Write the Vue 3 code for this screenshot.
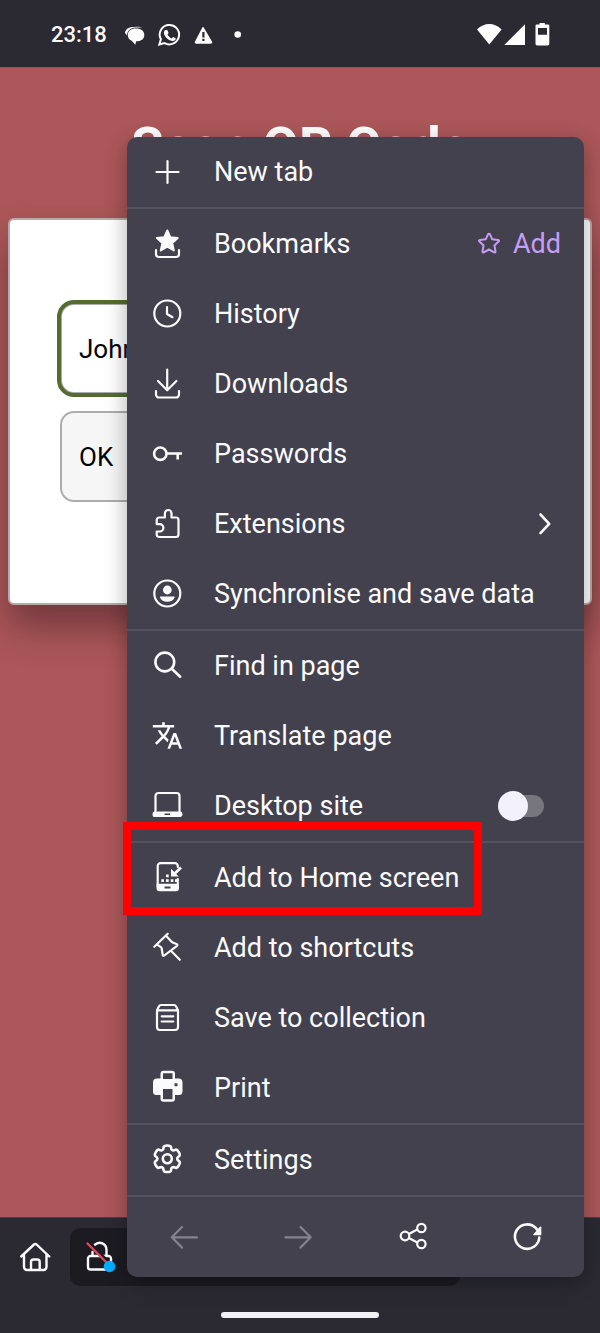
<script setup>
import { ref } from 'vue'

const name = ref('John')
const desktopSite = ref(false)

const groups = [
  [{ id: 'plus', label: 'New tab' }],
  [
    { id: 'bookmarks', label: 'Bookmarks' },
    { id: 'history', label: 'History' },
    { id: 'downloads', label: 'Downloads' },
    { id: 'passwords', label: 'Passwords' },
    { id: 'extensions', label: 'Extensions' },
    { id: 'sync', label: 'Synchronise and save data' },
  ],
  [
    { id: 'find', label: 'Find in page' },
    { id: 'translate', label: 'Translate page' },
    { id: 'desktop', label: 'Desktop site' },
  ],
  [
    { id: 'homescreen', label: 'Add to Home screen' },
    { id: 'shortcuts', label: 'Add to shortcuts' },
    { id: 'collection', label: 'Save to collection' },
    { id: 'print', label: 'Print' },
  ],
  [{ id: 'settings', label: 'Settings' }],
]

// Line art on a 32x32 grid
const strokes = {
  plus: 'M16.5 5v22M5.5 16h22',
  bookmarks: 'M5 22v4a3 3 0 0 0 3 3h17a3 3 0 0 0 3-3v-4',
  history: 'M29.3 15.5a13 13 0 1 1-26 0a13 13 0 0 1 26 0zM16 9v7l5.5 3.2',
  downloads: 'M16.2 1.5V22M7 13l9.2 9.3L25.4 13M5 23v3.5a3 3 0 0 0 3 3h17a3 3 0 0 0 3-3V23',
  passwords: 'M15.5 15.7a6.2 6.2 0 1 1-12.4 0a6.2 6.2 0 0 1 12.4 0zM15.5 15.5H31M26.7 15.5V21.5',
  extensions:
    'M13.9 9.5V5.3a3.3 3.3 0 0 1 6.6 0v4.2h4.5a2.5 2.5 0 0 1 2.5 2.5v14.5a2.5 2.5 0 0 1-2.5 2.5H8.2a2.5 2.5 0 0 1-2.5-2.5v-3h3a3.7 3.7 0 0 0 0-7.4h-3V12a2.5 2.5 0 0 1 2.5-2.5z',
  sync: 'M29.3 15.5a13 13 0 1 1-26 0a13 13 0 0 1 26 0z',
  find: 'M23.2 12a9.4 9.4 0 1 1-18.8 0a9.4 9.4 0 0 1 18.8 0zM20.5 18.5l8.700 8.200',
  desktop: 'M4.5 22V6a3 3 0 0 1 3-3h18a3 3 0 0 1 3 3v16',
  homescreen: 'M26.8 5V4a2.800 2.800 0 0 0-2.800-2.800H9.500A2.800 2.800 0 0 0 6.700 4v21M26.800 17v8',
  shortcuts:
    'M3.300 14.800L16.700 1.800M6 12.600l3.600 2.300q.9.600 1.100 1.600l1 6.500q.4 1.500 1.600.5L26 13.800q1-1.200-.5-1.800l-3.800-1.500q-.8-.3-1.300-1L15.500 4.200M20.200 19l8.600 8.800',
  collection:
    'M6 8.300L8 4.200Q8.600 3 10 3h13q1.400 0 2 1.200l2 4.100V25a3 3 0 0 1-3 3H9a3 3 0 0 1-3-3zM6 8.300h21M10.700 14.300h11.600M10.700 19.500h11.600',
}

// Six-toothed wheel traced from polar points, corners softened by quadratic curves
function gearPath(cx, cy) {
  const pts = []
  for (let i = 0; i < 6; i++) {
    const a = i * 60
    for (const [d, r] of [[-16, 13.8], [16, 13.8], [22, 10], [38, 10]]) {
      const t = ((a + d - 90) * Math.PI) / 180
      pts.push([cx + r * Math.cos(t), cy + r * Math.sin(t)])
    }
  }
  const mid = (p, q) => `${(p[0] + q[0]) / 2} ${(p[1] + q[1]) / 2}`
  let d = `M${mid(pts[pts.length - 1], pts[0])}`
  pts.forEach((p, i) => {
    d += `Q${p[0]} ${p[1]} ${mid(p, pts[(i + 1) % pts.length])}`
  })
  return d + 'z'
}
strokes.settings = gearPath(16.3, 14.8) + 'M20.8 14.8a4.5 4.5 0 1 1-9 0a4.5 4.5 0 0 1 9 0z'
</script>

<template>
  <div class="screen">
    <header class="status">
      <time class="clock">23:18</time>
      <svg class="notices" width="120" height="24" viewBox="0 0 120 24" aria-hidden="true">
        <path fill="#fff" d="M9 4C4 3.800.3 6 0 10l2 2.500C2.300 8 5 5 11 4.600h6.500C14.500 3.300 12 3.600 9 4z" />
        <path fill="#fff" d="M11 5.500c5 0 8.300 2.200 8.300 6.500 0 4-3 6.300-8.300 6.300l-.6 3.500-3.700-4C4 16.800 2.800 14.500 2.800 12c0-4.300 3.200-6.500 8.200-6.500z" />
        <path fill="none" stroke="#fff" stroke-width="2" d="M34.300 21.500l1.600-5.200a9.700 9.700 0 1 1 3.600 3.700z" />
        <path fill="#fff" d="M40.300 7h2l1.300 3-1.100 1.600c1 2 2.300 3 4 3.800l1.600-1.500 2.700 1.300c0 2-1.800 3-3.700 2.700-4-.7-8-4.700-8.200-8 0-1.200.6-2.300 1.400-2.900z" />
        <path fill="#fff" fill-rule="evenodd" d="M78.600 4.300 87 18.500a1.500 1.500 0 0 1-1.300 2.300H71.300a1.500 1.500 0 0 1-1.300-2.300l7.200-13.800a.9.900 0 0 1 1.400-.4zM77.300 9v5.500h2.200V9zM77.300 15.800V18h2.200v-2.200z" />
        <circle cx="112.700" cy="11.500" r="3.300" fill="#fff" />
      </svg>
      <svg class="signals" width="74" height="24" viewBox="0 0 74 24" aria-label="Wi-Fi, mobile signal and battery">
        <path fill="#fff" d="M0 6.500Q5.500 1 12.300 1t12.300 5.500L12.300 21.500z" />
        <path fill="#fff" d="M48 1.200V22H27.300z" />
        <path fill="#fff" fill-rule="evenodd" d="M62.500 0h5.300v1.500h3.200a1.300 1.300 0 0 1 1.300 1.300v18a1.700 1.700 0 0 1-1.700 1.700h-10.400a1.700 1.700 0 0 1-1.700-1.700v-18A1.300 1.300 0 0 1 59.800 1.500h2.700zM61 5v6.800h9V5z" />
      </svg>
    </header>

    <main class="page">
      <h1>Scan QR Code</h1>
      <form class="card" @submit.prevent>
        <input v-model="name" class="field" type="text" aria-label="Name" />
        <button class="ok" type="submit">OK</button>
      </form>
    </main>

    <footer class="toolbar">
      <div class="tools">
        <button class="home" aria-label="Home">
          <svg width="32" height="32" viewBox="0 0 32 32" fill="none" stroke="#fbfbfe" stroke-width="2.400" stroke-linecap="round" stroke-linejoin="round">
            <path d="M2.200 15.500 15 3.500q1.300-1 2.600 0l12.700 12M5 13.500V26a3 3 0 0 0 3 3h16.500a3 3 0 0 0 3-3V13.500M12 29v-8a2.500 2.500 0 0 1 2.500-2.500h3.700a2.500 2.500 0 0 1 2.500 2.500v8" />
          </svg>
        </button>
        <button class="address" aria-label="Site security">
          <svg width="32" height="34" viewBox="0 0 32 34" fill="none" stroke-width="2.400" stroke-linecap="round" stroke-linejoin="round">
            <path stroke="#fbfbfe" d="M7.500 16v-4M9.500 5c5-4.500 12-1.500 12 5v6M5.500 16h18a2.500 2.500 0 0 1 2.500 2.500V27a2.500 2.500 0 0 1-2.500 2.500h-18A2.500 2.500 0 0 1 3 27v-8.500A2.500 2.500 0 0 1 5.500 16z" />
            <path stroke="#1c1b22" stroke-width="3" d="M6 4l18 18.500" />
            <path stroke="#e2445c" d="M2.500 3.500l19 19" />
            <circle cx="24.500" cy="26.500" r="5.800" fill="#00aeff" />
          </svg>
        </button>
      </div>
      <div class="handle"></div>
    </footer>

    <nav class="menu" aria-label="Browser menu">
      <ul v-for="(group, g) in groups" :key="g">
        <li v-for="item in group" :key="item.id">
          <component :is="item.id === 'desktop' ? 'label' : 'button'" class="item" :for="item.id === 'desktop' ? 'desktop-site' : undefined">
            <svg class="icon" width="32" height="32" viewBox="0 0 32 32" aria-hidden="true">
              <path v-if="strokes[item.id]" class="line" :class="item.id" :d="strokes[item.id]" />
              <path v-if="item.id === 'bookmarks'" class="fill star" d="M16.300 2.500l3 6.700 7.400.8-5.500 5 1.600 7.400-6.500-3.700-6.500 3.700 1.600-7.400-5.500-5 7.400-.8z" />
              <template v-if="item.id === 'sync'">
                <circle class="fill" cx="16.300" cy="12" r="4.400" />
                <path class="fill" d="M9.500 18.400h13.600q.8 0 .6.8c-1 3-4 4.600-7.400 4.600s-6.400-1.600-7.400-4.600q-.2-.8.6-.8z" />
              </template>
              <path v-if="item.id === 'translate'" class="fill" transform="translate(.5 -.4) scale(1.330)" d="M12.870 15.070l-2.540-2.510.03-.03c1.740-1.940 2.980-4.170 3.710-6.530H17V4h-7V2H8v2H1v1.990h11.170C11.500 7.920 10.440 9.750 9 11.350 8.070 10.320 7.300 9.190 6.690 8h-2c.73 1.630 1.730 3.170 2.980 4.560l-5.090 5.020L4 19l5-5 3.110 3.110.76-2.040zM18.500 10h-2L12 22h2l1.120-3h4.750L21 22h2l-4.500-12zm-2.620 7l1.620-4.330L19.120 17h-3.240z" />
              <path v-if="item.id === 'desktop'" class="fill" fill-rule="evenodd" d="M3.500 21.500h26q2 0 2 2.700t-2 2.800h-26q-2 0-2-2.800t2-2.700zM13.500 23.500v1.600h5.500v-1.600z" />
              <template v-if="item.id === 'homescreen'">
                <path class="fill" fill-rule="evenodd" d="M5.600 21.700h22.300v4.800a2.800 2.800 0 0 1-2.800 2.800H8.400a2.800 2.800 0 0 1-2.800-2.800zM13.500 24.500v2h6v-2z" />
                <path class="fill" d="M10.300 17.200h2.700v2.700h-2.700zM15 17.200h2.700v2.700H15zM19.700 17.200h2.700v2.700h-2.700zM24 17.200h2.700v2.700H24zM15 12.600h2.700v2.700H15zM20 6.700v7.800h7.700l-2.500-2.600 5.800-5.400-2-2-5.700 5.400z" />
              </template>
              <path v-if="item.id === 'print'" class="fill" fill-rule="evenodd" d="M9.500 6.500V1.700a3 3 0 0 1 3-3H21a3 3 0 0 1 3 3v4.800h3.500a4 4 0 0 1 4 4v9a3.500 3.500 0 0 1-3.500 3.500h-4v3.700a3 3 0 0 1-3 3h-8.500a3 3 0 0 1-3-3V23h-4a3.500 3.500 0 0 1-3.500-3.500v-9a4 4 0 0 1 4-4zM12 1.200V7h9.500V1.200zM12 17v10.300h9.500V17zM23.500 11.300v3h3v-3z" />
            </svg>
            <span class="label">{{ item.label }}</span>
            <svg v-if="item.id === 'extensions'" class="chevron" width="16" height="24" viewBox="0 0 16 24" aria-hidden="true">
              <path class="line" d="M3.500 2.500l8.700 9.300-8.700 9.300" />
            </svg>
            <input v-if="item.id === 'desktop'" id="desktop-site" v-model="desktopSite" class="switch" type="checkbox" />
            <span v-if="item.id === 'homescreen'" class="highlight"></span>
          </component>
          <button v-if="item.id === 'bookmarks'" class="add">
            <svg width="24" height="24" viewBox="0 0 24 24" aria-hidden="true">
              <path fill="none" stroke="currentColor" stroke-width="2" stroke-linejoin="round" d="M12 1.700q.7 0 1 .7l2.300 4.900 5.800.7q1.500.4.5 1.500l-4.200 3.900 1.100 6q0 1.400-1.300.9L12 17.500l-5.200 2.800q-1.300.5-1.300-.9l1.100-6-4.200-3.900q-1-1.100.5-1.500l5.800-.7L11 2.400q.3-.7 1-.7z" />
            </svg>
            <span>Add</span>
          </button>
        </li>
      </ul>
      <div class="actions">
        <button disabled aria-label="Back">
          <svg width="32" height="32" viewBox="0 0 32 32"><path class="line" d="M29 16.300H4M14 6 3.800 16.300 14 26.600" /></svg>
        </button>
        <button disabled aria-label="Forward">
          <svg width="32" height="32" viewBox="0 0 32 32"><path class="line" d="M3.500 16.300h25M18.500 6l10.200 10.300L18.500 26.600" /></svg>
        </button>
        <button aria-label="Share">
          <svg width="32" height="32" viewBox="0 0 32 32">
            <path class="line" d="M12.300 12.800l7.500-4M12.300 17.300l7.500 4" />
            <circle class="line" cx="8" cy="15" r="4.300" />
            <circle class="line" cx="24.400" cy="7" r="4.200" />
            <circle class="line" cx="24.400" cy="23" r="4.200" />
          </svg>
        </button>
        <button aria-label="Reload">
          <svg width="32" height="32" viewBox="0 0 32 32">
            <path class="line heavy" d="M28.300 16.500a12.200 12.200 0 1 1-3.300-9.300l3 4" />
            <path class="fill" d="M30.300 6.300v7.200q0 .8-.8.8h-6.700q-1.200 0-.4-1l6.500-7.500q1.400-1 1.400.5z" />
          </svg>
        </button>
      </div>
    </nav>
  </div>
</template>

<style>
body {
  margin: 0;
}
</style>

<style scoped>
.screen {
  position: relative;
  display: flex;
  flex-direction: column;
  min-height: 100vh;
  overflow: hidden;
  background: #2b2a33;
  color: #fbfbfe;
  font-family: Roboto, "Liberation Sans", sans-serif;
  font-size: 26px;
}
button {
  padding: 0;
  border: 0;
  background: none;
  color: inherit;
  font: inherit;
}
svg {
  flex: none;
  overflow: visible;
}
.status {
  display: flex;
  align-items: center;
  box-sizing: border-box;
  height: 67px;
  padding: 2px 49px 0 51px;
}
.clock {
  font-size: 22px;
  font-weight: 500;
}
.notices {
  margin-left: 18px;
}
.signals {
  margin-left: auto;
}
.page {
  flex: 1;
  border-top: 1px solid #97545b;
  background: #ac5759;
}
h1 {
  margin: 49px 0 41px;
  color: #fff;
  font-size: 53px;
  font-weight: 700;
  line-height: 60px;
  text-align: center;
}
.card {
  display: flex;
  flex-direction: column;
  gap: 17px;
  margin: 0 8px;
  padding: 83px 50px 101px;
  border: 2px solid #b9aaa9;
  border-radius: 6px;
  background: #fff;
  box-shadow: 0 22px 36px rgba(30, 10, 20, 0.4);
}
.field,
.ok {
  box-sizing: border-box;
  height: 91px;
  padding: 0 17px;
  border: 2px solid #adadad;
  border-radius: 14px;
  color: #000;
  font: inherit;
  text-align: left;
}
.field {
  background: #fff;
  outline: 4px solid #556b2f;
  outline-offset: -1px;
}
.ok {
  background: #f6f6f6;
}
.toolbar {
  display: flex;
  flex-direction: column;
  align-items: center;
  box-sizing: border-box;
  height: 116px;
  padding: 10px 19px 0;
  border-top: 1px solid #4a3d45;
}
.tools {
  display: flex;
  align-self: stretch;
  gap: 20px;
}
.home {
  display: flex;
  align-items: center;
  width: 31px;
}
.address {
  display: flex;
  align-items: center;
  box-sizing: border-box;
  width: 390px;
  height: 58px;
  padding-left: 15px;
  border-radius: 10px;
  background: #1c1b22;
}
.handle {
  width: 158px;
  height: 6px;
  margin-top: 26px;
  border-radius: 3px;
  background: #f2f1f5;
}
.menu {
  position: absolute;
  right: 16px;
  bottom: 56px;
  width: 457px;
  border-radius: 10px;
  background: #42414d;
  box-shadow: 0 6px 22px rgba(0, 0, 0, 0.32);
  font-size: 27px;
}
ul {
  margin: 0;
  padding: 0;
  border-bottom: 2px solid #53525e;
  list-style: none;
}
li {
  display: flex;
}
.item {
  position: relative;
  display: flex;
  flex: 1;
  align-items: center;
  height: 70px;
  padding: 0 31px 0 24px;
  text-align: left;
}
.label {
  flex: 1;
  margin-left: 31px;
  white-space: nowrap;
}
.line {
  fill: none;
  stroke: currentColor;
  stroke-width: 2.2;
  stroke-linecap: round;
  stroke-linejoin: round;
}
.line.passwords,
.line.find,
.line.settings,
.chevron .line,
.heavy {
  stroke-width: 2.6;
}
.line.passwords {
  stroke-linecap: butt;
}
.fill {
  fill: currentColor;
}
.star {
  stroke: currentColor;
  stroke-width: 2;
  stroke-linejoin: round;
}
.add {
  display: flex;
  align-items: center;
  gap: 12px;
  margin-right: 23px;
  color: #c69df7;
}
.switch {
  position: relative;
  width: 46px;
  height: 30px;
  margin: 0 9px 0 0;
  appearance: none;
}
.switch::before {
  position: absolute;
  inset: 4px 0 4px 12px;
  border-radius: 11px;
  background: #77767e;
  content: "";
}
.switch::after {
  position: absolute;
  top: 0;
  left: 0;
  width: 30px;
  height: 30px;
  border-radius: 50%;
  background: #f3f1fc;
  content: "";
}
.switch:checked::after {
  left: 16px;
}
.highlight {
  position: absolute;
  inset: -21px 102px -2px -4px;
  border: 8px solid #f00;
  pointer-events: none;
}
.actions {
  display: grid;
  grid-template-columns: repeat(4, 1fr);
  height: 80px;
}
.actions button {
  display: flex;
  align-items: center;
  justify-content: center;
}
.actions button:disabled {
  color: #85848e;
}
</style>
